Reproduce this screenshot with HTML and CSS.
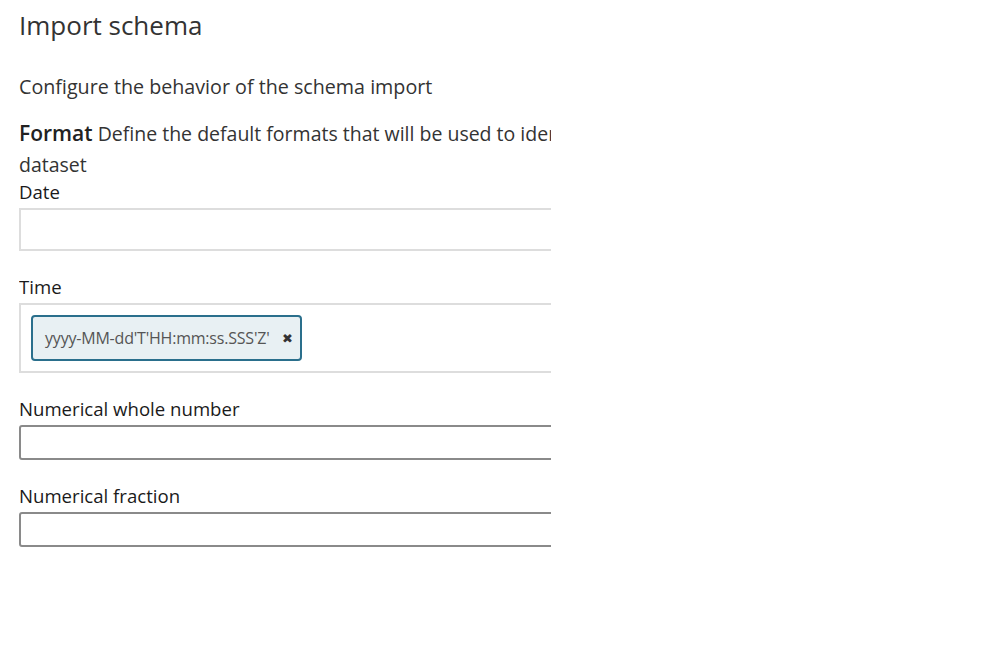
FILE: index.html
```html
<!DOCTYPE html>
<html>
<head>
<meta charset="utf-8">
<link rel="stylesheet" href="styles.css">
</head>
<body>
<div class="panel">
  <div class="content">
    <h1 class="title">Import schema</h1>
    <p class="intro">Configure the behavior of the schema import</p>
    <p class="desc"><span class="desc-head">Format</span> Define the default formats that will be used to identify types in the dataset</p>
    <div class="field field-date">
      <label class="label">Date</label>
      <div class="tagbox tagbox-empty"></div>
    </div>
    <div class="field">
      <label class="label">Time</label>
      <div class="tagbox">
        <span class="tag">yyyy-MM-dd'T'HH:mm:ss.SSS'Z'<span class="tag-x">✖</span></span>
      </div>
    </div>
    <div class="field">
      <label class="label">Numerical whole number</label>
      <div class="input"></div>
    </div>
    <div class="field">
      <label class="label">Numerical fraction</label>
      <div class="input"></div>
    </div>
  </div>
</div>
</body>
</html>
```
FILE: styles.css
```css
html, body {
  margin: 0;
  padding: 0;
  background: #fff;
}
body {
  font-family: "Open Sans", "Noto Sans", sans-serif;
  color: #333;
}
.panel {
  width: 532px;
  margin-left: 19px;
  overflow: hidden;
}
.content {
  width: 720px;
}
.title {
  margin: 0;
  padding-top: 8px;
  font-size: 26px;
  font-weight: 400;
  line-height: 34px;
  color: #333;
}
.intro {
  margin: 31px 0 0;
  font-size: 19.7px;
  line-height: 28px;
}
.desc {
  margin: 17px 0 0;
  font-size: 19.5px;
  line-height: 31px;
}
.desc-head {
  font-size: 21px;
  font-weight: 600;
  color: #222;
}
.field + .field {
  margin-top: 24px;
}
.label {
  display: block;
  font-size: 18.6px;
  line-height: 24px;
  font-weight: 500;
  color: #1a1a1a;
  margin-bottom: 4px;
}
.tagbox {
  border: 2px solid #ddd;
  padding: 10px;
  box-sizing: border-box;
}
.tagbox-empty {
  height: 43px;
}
.tag {
  display: inline-flex;
  align-items: center;
  height: 46px;
  box-sizing: border-box;
  padding: 0 8px 0 12px;
  border: 2px solid #2a6f8c;
  border-radius: 4px;
  background: #e8f0f3;
  font-size: 16px;
  color: #555;
  letter-spacing: -0.2px;
}
.tag-x {
  margin-left: 12px;
  font-size: 13px;
  color: #333;
}
.input {
  height: 35px;
  box-sizing: border-box;
  border: 2px solid #8a8a8a;
  border-radius: 3px;
}
```
